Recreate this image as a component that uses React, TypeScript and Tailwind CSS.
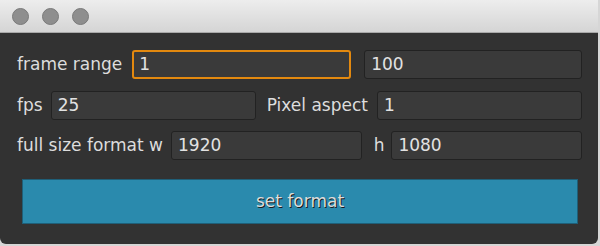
import React from "react"

function Field({ value, focused = false }: { value: string; focused?: boolean }) {
  return (
    <div
      className={
        focused
          ? "flex h-[29px] min-w-0 flex-1 items-center rounded-[3px] border-2 border-[#e3890f] bg-[#3a3a3a] pl-[5px]"
          : "flex h-[29px] min-w-0 flex-1 items-center rounded-[3px] border border-[#222222] bg-[#3a3a3a] pl-[6px]"
      }
    >
      <span className="text-[17px] leading-none text-[#e2e2e2]">{value}</span>
    </div>
  )
}

function Label({ children, className = "" }: { children: React.ReactNode; className?: string }) {
  return (
    <span className={"shrink-0 text-[17px] leading-none text-[#dddddd] " + className}>
      {children}
    </span>
  )
}

export default function App() {
  return (
    <div
      className="h-[246px] w-[600px] bg-[#d6d6d6]"
      style={{ fontFamily: '"DejaVu Sans", Verdana, sans-serif' }}
    >
      <div className="flex h-[244px] w-[598px] flex-col overflow-hidden rounded-b-[6px] bg-[#323232]">
        <div className="flex h-[33px] shrink-0 items-center gap-[13px] border-b border-[#a9a9a9] bg-gradient-to-b from-[#ededed] to-[#d5d5d5] pl-[12px]">
          <div className="h-[17px] w-[17px] rounded-full border border-[#7a7a7a] bg-[#8e8e8e]" />
          <div className="h-[17px] w-[17px] rounded-full border border-[#7a7a7a] bg-[#8e8e8e]" />
          <div className="h-[17px] w-[17px] rounded-full border border-[#7a7a7a] bg-[#8e8e8e]" />
        </div>
        <div className="flex flex-col pl-[17px] pr-[16px] pt-[17px]">
          <div className="flex items-center">
            <Label className="mr-[10px]">frame range</Label>
            <Field value="1" focused />
            <div className="w-[13px] shrink-0" />
            <Field value="100" />
          </div>
          <div className="mt-[12px] flex items-center">
            <Label className="mr-[8px]">fps</Label>
            <Field value="25" />
            <Label className="ml-[11px] mr-[9px]">Pixel aspect</Label>
            <Field value="1" />
          </div>
          <div className="mt-[11px] flex items-center">
            <Label className="mr-[8px]">full size format w</Label>
            <Field value="1920" />
            <Label className="ml-[12px] mr-[7px]">h</Label>
            <Field value="1080" />
          </div>
          <button className="mb-0 ml-[5px] mr-[4px] mt-[19px] flex h-[45px] items-center justify-center border border-[#1f5f78] bg-[#2a8aad] text-[17px] text-[#dcdcdc] [text-shadow:1px_1px_0_#1a1a1a]">
            set format
          </button>
        </div>
      </div>
    </div>
  )
}
